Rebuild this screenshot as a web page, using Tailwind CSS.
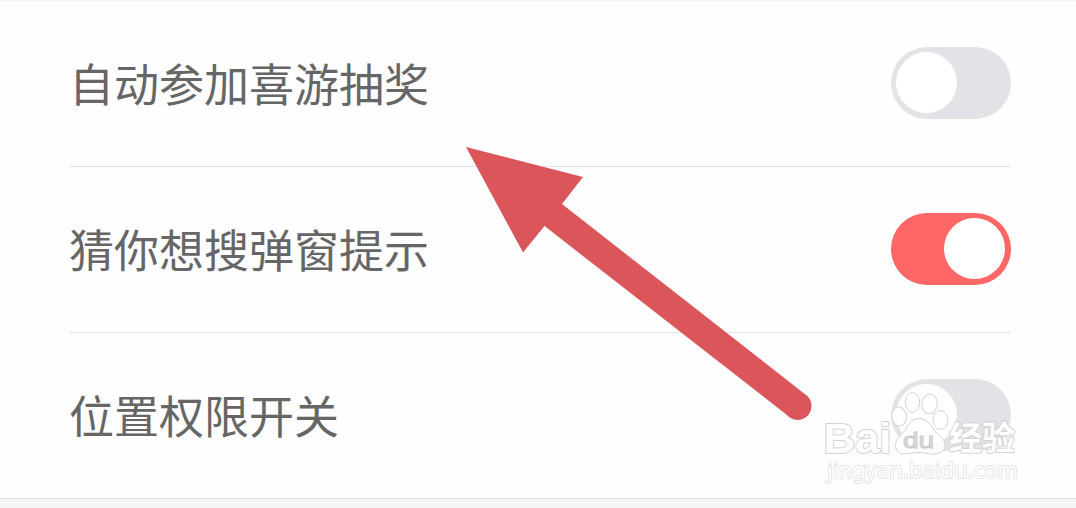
<!DOCTYPE html>
<html lang="zh-CN">
<head>
    <meta charset="UTF-8">
    <meta name="viewport" content="width=device-width, initial-scale=1.0">
    <title>设置</title>
    <script src="https://cdn.jsdelivr.net/npm/@tailwindcss/browser@4"></script>
</head>
<body class="relative h-[508px] overflow-hidden bg-[#f5f5f5] font-['Noto_Sans_CJK_SC',sans-serif]">
    <!-- Settings list -->
    <main class="h-[499px] border-t border-b border-t-[#f3f3f3] border-b-[#dedede] bg-[#fefefe] pr-[65px] pl-[69px] text-[45px] leading-none text-[#666]">
        <div class="flex h-[166px] items-center justify-between border-b border-[#e3e3e3] pb-0.5">
            <span>自动参加喜游抽奖</span>
            <button type="button" role="switch" aria-checked="false" aria-label="自动参加喜游抽奖" class="flex h-[72px] w-[120px] items-center rounded-full bg-[#e2e3e7] px-[5px]">
                <span class="size-[61px] rounded-full bg-white"></span>
            </button>
        </div>
        <div class="flex h-[166px] items-center justify-between border-b border-[#e3e3e3] pb-0.5">
            <span>猜你想搜弹窗提示</span>
            <button type="button" role="switch" aria-checked="true" aria-label="猜你想搜弹窗提示" class="flex h-[72px] w-[120px] items-center justify-end rounded-full bg-[#ff6666] px-1.5">
                <span class="size-[61px] rounded-full bg-white"></span>
            </button>
        </div>
        <div class="flex h-[165px] items-center justify-between pb-0.5">
            <span>位置权限开关</span>
            <button type="button" role="switch" aria-checked="false" aria-label="位置权限开关" class="flex h-[72px] w-[120px] items-center rounded-full bg-[#e2e3e7] px-[5px]">
                <span class="size-[61px] rounded-full bg-white"></span>
            </button>
        </div>
    </main>

    <!-- Arrow -->
    <svg class="pointer-events-none absolute top-[140px] left-[460px]" width="360" height="285" viewBox="460 140 360 285" fill="#da565b">
        <path d="M466 147L583 177L562 204L806 395A13.500 13.500 0 0 1 789.500 417L544.500 226L523 252.500Z"/>
        <circle cx="797.500" cy="406" r="13.700"/>
    </svg>

    <!-- Watermark -->
    <svg class="pointer-events-none absolute top-[385px] left-[820px]" width="205" height="105" viewBox="820 385 205 105" fill="#fff" stroke="#d3d3d5" stroke-width="1">
        <g fill-opacity=".85">
            <ellipse cx="899" cy="416.500" rx="7.500" ry="9.500" transform="rotate(-8 899 416.500)"/>
            <ellipse cx="912.500" cy="402.500" rx="7.200" ry="9.800"/>
            <ellipse cx="929.500" cy="404" rx="7.800" ry="9.800" transform="rotate(8 929.500 404)"/>
            <ellipse cx="940.500" cy="420" rx="7.500" ry="9.500"/>
            <path d="M919 418.500C927 418.500 931 425 934 430C938 436 945 438 945 445C945 451 940 454 933 454C928 454 924 452.500 919 452.500C914 452.500 910 454 905 454C899 454 895.500 451 895.500 445C895.500 438 902 435 906 429C909 424 912 418.500 919 418.500Z"/>
        </g>
        <g paint-order="stroke" stroke-width="2" stroke-linejoin="round">
            <text x="823.500" y="452.500" font-family="Liberation Sans, sans-serif" font-size="43" font-weight="700" textLength="68" lengthAdjust="spacingAndGlyphs">Bai</text>
            <text x="949" y="449.500" font-family="Noto Sans CJK SC, sans-serif" font-size="32.500" font-weight="700" textLength="66" lengthAdjust="spacingAndGlyphs">经验</text>
            <text x="827" y="478" font-family="Noto Sans, sans-serif" font-size="22" stroke="#dddddf" stroke-width="1.500" textLength="191" lengthAdjust="spacingAndGlyphs">jingyan.baidu.com</text>
        </g>
        <text x="903" y="448" font-family="Liberation Sans, sans-serif" font-size="22" font-weight="400" fill="#e2e2e5" stroke="#c9c9cc" stroke-width="1" textLength="31" lengthAdjust="spacingAndGlyphs">du</text>
    </svg>
</body>
</html>
